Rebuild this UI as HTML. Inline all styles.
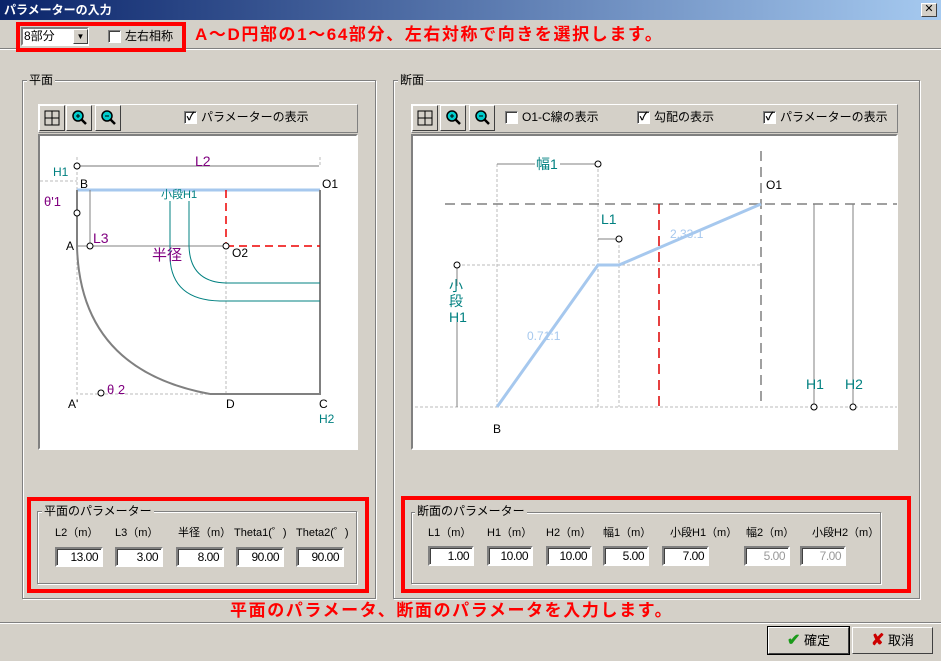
<!DOCTYPE html>
<html><head><meta charset="utf-8"><style>
*{box-sizing:border-box;margin:0;padding:0}
body{width:941px;height:661px;background:#d4d0c8;font-family:"Liberation Sans","Noto Sans CJK JP",sans-serif;font-size:12px;color:#000;position:relative;overflow:hidden}
.a{position:absolute}
.title{left:0;top:0;width:941px;height:20px;background:linear-gradient(90deg,#0a246a,#a6caf0);color:#fff;font-weight:bold;font-size:12px;line-height:20px;padding-left:4px}
.xb{right:4px;top:3px;width:16px;height:14px;background:#d4d0c8;border:1px solid;border-color:#fff #404040 #404040 #fff;color:#000;font-size:11px;line-height:11px;text-align:center}
.grp{border:1px solid #808080;box-shadow:1px 1px 0 #fff inset,1px 1px 0 #fff}
.lg{background:#d4d0c8;padding:0 2px;line-height:14px}
.redbox{border:4px solid #f00}
.rt{color:#f00;font-weight:bold;font-size:17px;line-height:20px;letter-spacing:1.6px;white-space:nowrap}
.tb{border:1px solid;border-color:#fff #808080 #808080 #fff}
.btn{width:26px;height:26px;border:1px solid;border-color:#fff #404040 #404040 #fff;background:#d4d0c8}
.cv{background:#fff;border:2px solid;border-color:#808080 #fff #fff #808080}
.cb{width:13px;height:13px;background:#fff;border:1px solid;border-color:#808080 #fff #fff #808080;box-shadow:1px 1px 0 #404040 inset;font-size:11px;line-height:11px;text-align:center;font-weight:bold}
.in{height:20px;background:#fff;border:2px solid;border-color:#808080 #fff #fff #808080;box-shadow:1px 1px 0 #404040 inset;text-align:right;padding-right:3px;line-height:16px;font-size:12px;letter-spacing:-0.5px}
.dis{background:#fff;color:#999}
.pb{width:81px;height:27px;border:1px solid;border-color:#fff #404040 #404040 #fff;background:#d4d0c8;text-align:center;line-height:25px;font-size:13px}
.lb{font-size:11px;white-space:nowrap}
</style></head><body>
<div class="a title">パラメーターの入力</div>
<div class="a xb">✕</div>

<div class="a" style="left:0;top:48px;width:941px;height:2px;border-top:1px solid #808080;border-bottom:1px solid #fff"></div>
<div class="a redbox" style="left:16px;top:22px;width:170px;height:30px"></div>
<div class="a" style="left:21px;top:27px;width:68px;height:19px;background:#fff;border:2px solid;border-color:#808080 #fff #fff #808080;font-size:12px;line-height:15px;padding-left:1px">8部分</div>
<div class="a" style="left:73px;top:29px;width:15px;height:15px;border:1px solid;border-color:#fff #404040 #404040 #fff;background:#d4d0c8;font-size:8px;text-align:center;line-height:13px">▼</div>
<div class="a cb" style="left:108px;top:30px"></div>
<div class="a" style="left:125px;top:27px;line-height:18px">左右相称</div>
<div class="a rt" style="left:195px;top:25px">A～D円部の1～64部分、左右対称で向きを選択します。</div>

<!-- left group -->
<div class="a grp" style="left:22px;top:80px;width:354px;height:519px"></div>
<div class="a lg" style="left:27px;top:73px">平面</div>
<div class="a tb" style="left:38px;top:104px;width:320px;height:29px"></div>
<div class="a btn" style="left:39px;top:105px"><svg width="24" height="24"><rect x="5" y="5" width="14" height="14" fill="none" stroke="#000"/><path d="M12 5V19M5 12H19" stroke="#000"/></svg></div>
<div class="a btn" style="left:66px;top:105px"><svg width="24" height="24"><circle cx="11" cy="10" r="5" fill="#0cc" stroke="#000" stroke-width="1.5"/><path d="M9 10h4M11 8v4" stroke="#000"/><path d="M14 13l5 5" stroke="#000" stroke-width="2.5"/></svg></div>
<div class="a btn" style="left:95px;top:105px"><svg width="24" height="24"><circle cx="11" cy="10" r="5" fill="#0cc" stroke="#000" stroke-width="1.5"/><path d="M9 10h4" stroke="#000"/><path d="M14 13l5 5" stroke="#000" stroke-width="2.5"/></svg></div>
<div class="a cb" style="left:184px;top:111px">✓</div>
<div class="a" style="left:201px;top:109px;line-height:16px">パラメーターの表示</div>
<div class="a cv" style="left:38px;top:134px;width:320px;height:316px"></div>
<svg class="a" style="left:0;top:0" width="941" height="661" font-family="Liberation Sans, Noto Sans CJK JP, sans-serif" font-size="12">
<g stroke="#bbb" stroke-dasharray="3,2" fill="none"><path d="M77 157V394H226M226 246V394M320 157V166M40 181H77"/></g>
<path d="M77 166H319" stroke="#777"/>
<path d="M77 190H320" stroke="#a6c8ee" stroke-width="3"/>
<path d="M320 190V394H210" stroke="#808080" stroke-width="2" fill="none"/>
<path d="M77 190V246" stroke="#808080" stroke-width="2"/>
<path d="M77 246Q80 370 210 394" stroke="#808080" stroke-width="2" fill="none"/>
<path d="M90 190V246M77 246H226" stroke="#808080"/>
<path d="M226 190V246M226 246H320" stroke="#e00" stroke-width="1.5" stroke-dasharray="8,5"/>
<path d="M170 201V258Q172 300 220 301H320M189 201V246Q190 282 226 283H320" stroke="#008080" fill="none"/>
<g fill="#fff" stroke="#000"><circle cx="77" cy="166" r="3"/><circle cx="77" cy="213" r="3"/><circle cx="90" cy="246" r="3"/><circle cx="226" cy="246" r="3"/><circle cx="101" cy="393" r="3"/></g>
<g fill="#800080"><text x="195" y="166" font-size="14">L2</text><text x="93" y="243" font-size="14">L3</text><text x="152" y="260" font-size="15">半径</text><text x="44" y="206" font-size="13">θ'1</text><text x="107" y="394" font-size="13">θ 2</text></g>
<g fill="#008080"><text x="53" y="176">H1</text><text x="319" y="423">H2</text><text x="161" y="198" font-size="11">小段H1</text></g>
<g fill="#000"><text x="80" y="188">B</text><text x="322" y="188">O1</text><text x="66" y="250">A</text><text x="232" y="257">O2</text><text x="68" y="408">A'</text><text x="226" y="408">D</text><text x="319" y="408">C</text></g>

<g stroke="#bbb" stroke-dasharray="3,2" fill="none"><path d="M415 407H897M497 164V407M598 164V407M619 240V407M457 265H761"/></g>
<path d="M445 204H897M761 151V407" stroke="#808080" stroke-width="1.5" stroke-dasharray="10,6"/>
<path d="M659 204V407" stroke="#d00" stroke-width="1.5" stroke-dasharray="10,6"/>
<path d="M497 407L598 265H619L761 204" stroke="#a6c8ee" stroke-width="3" fill="none"/>
<path d="M497 164H535M560 164H598M598 239H619M457 265V286M457 322V407M814 204V407M853 204V407" stroke="#808080"/>
<g fill="#fff" stroke="#000"><circle cx="598" cy="164" r="3"/><circle cx="619" cy="239" r="3"/><circle cx="457" cy="265" r="3"/><circle cx="814" cy="407" r="3"/><circle cx="853" cy="407" r="3"/></g>
<g fill="#008080" font-size="14"><text x="536" y="169">幅1</text><text x="601" y="224">L1</text><text x="449" y="291">小</text><text x="449" y="306">段</text><text x="449" y="322">H1</text><text x="806" y="389">H1</text><text x="845" y="389">H2</text></g>
<g fill="#a6c8ee"><text x="670" y="238">2.33:1</text><text x="527" y="340">0.71:1</text></g>
<g fill="#000"><text x="766" y="189">O1</text><text x="493" y="433">B</text></g>
</svg>

<div class="a redbox" style="left:27px;top:497px;width:342px;height:96px"></div>
<div class="a grp" style="left:37px;top:511px;width:320px;height:73px"></div>
<div class="a lg" style="left:42px;top:504px">平面のパラメーター</div>
<div class="a lb" style="left:55px;top:524px">L2（m）</div>
<div class="a lb" style="left:115px;top:524px">L3（m）</div>
<div class="a lb" style="left:178px;top:524px">半径（m）</div>
<div class="a lb" style="left:234px;top:524px">Theta1(゜)</div>
<div class="a lb" style="left:296px;top:524px">Theta2(゜)</div>
<div class="a in" style="left:55px;top:547px;width:48px">13.00</div>
<div class="a in" style="left:115px;top:547px;width:48px">3.00</div>
<div class="a in" style="left:176px;top:547px;width:48px">8.00</div>
<div class="a in" style="left:236px;top:547px;width:48px">90.00</div>
<div class="a in" style="left:296px;top:547px;width:48px">90.00</div>

<!-- right group -->
<div class="a grp" style="left:393px;top:80px;width:527px;height:519px"></div>
<div class="a lg" style="left:398px;top:73px">断面</div>
<div class="a tb" style="left:411px;top:104px;width:487px;height:29px"></div>
<div class="a btn" style="left:412px;top:105px"><svg width="24" height="24"><rect x="5" y="5" width="14" height="14" fill="none" stroke="#000"/><path d="M12 5V19M5 12H19" stroke="#000"/></svg></div>
<div class="a btn" style="left:440px;top:105px"><svg width="24" height="24"><circle cx="11" cy="10" r="5" fill="#0cc" stroke="#000" stroke-width="1.5"/><path d="M9 10h4M11 8v4" stroke="#000"/><path d="M14 13l5 5" stroke="#000" stroke-width="2.5"/></svg></div>
<div class="a btn" style="left:469px;top:105px"><svg width="24" height="24"><circle cx="11" cy="10" r="5" fill="#0cc" stroke="#000" stroke-width="1.5"/><path d="M9 10h4" stroke="#000"/><path d="M14 13l5 5" stroke="#000" stroke-width="2.5"/></svg></div>
<div class="a cb" style="left:505px;top:111px"></div>
<div class="a" style="left:522px;top:109px;line-height:16px">O1-C線の表示</div>
<div class="a cb" style="left:637px;top:111px">✓</div>
<div class="a" style="left:654px;top:109px;line-height:16px">勾配の表示</div>
<div class="a cb" style="left:763px;top:111px">✓</div>
<div class="a" style="left:780px;top:109px;line-height:16px">パラメーターの表示</div>
<div class="a cv" style="left:411px;top:134px;width:487px;height:316px;z-index:-1"></div>

<div class="a redbox" style="left:401px;top:496px;width:510px;height:97px"></div>
<div class="a grp" style="left:411px;top:512px;width:470px;height:72px"></div>
<div class="a lg" style="left:415px;top:504px">断面のパラメーター</div>
<div class="a lb" style="left:428px;top:524px">L1（m）</div>
<div class="a lb" style="left:487px;top:524px">H1（m）</div>
<div class="a lb" style="left:546px;top:524px">H2（m）</div>
<div class="a lb" style="left:603px;top:524px">幅1（m）</div>
<div class="a lb" style="left:670px;top:524px">小段H1（m）</div>
<div class="a lb" style="left:746px;top:524px">幅2（m）</div>
<div class="a lb" style="left:812px;top:524px">小段H2（m）</div>
<div class="a in" style="left:428px;top:546px;width:46px">1.00</div>
<div class="a in" style="left:487px;top:546px;width:46px">10.00</div>
<div class="a in" style="left:546px;top:546px;width:46px">10.00</div>
<div class="a in" style="left:603px;top:546px;width:46px">5.00</div>
<div class="a in" style="left:662px;top:546px;width:47px">7.00</div>
<div class="a in dis" style="left:744px;top:546px;width:46px">5.00</div>
<div class="a in dis" style="left:800px;top:546px;width:46px">7.00</div>

<div class="a rt" style="left:230px;top:601px">平面のパラメータ、断面のパラメータを入力します。</div>
<div class="a" style="left:0;top:622px;width:941px;height:2px;border-top:1px solid #808080;border-bottom:1px solid #fff"></div>
<div class="a pb" style="left:768px;top:627px;outline:1px solid #000"><span style="color:#1a9a1a;font-weight:bold;font-size:16px">✔</span> 確定</div>
<div class="a pb" style="left:852px;top:627px"><span style="color:#c00;font-weight:bold;font-size:16px">✘</span> 取消</div>
</body></html>
